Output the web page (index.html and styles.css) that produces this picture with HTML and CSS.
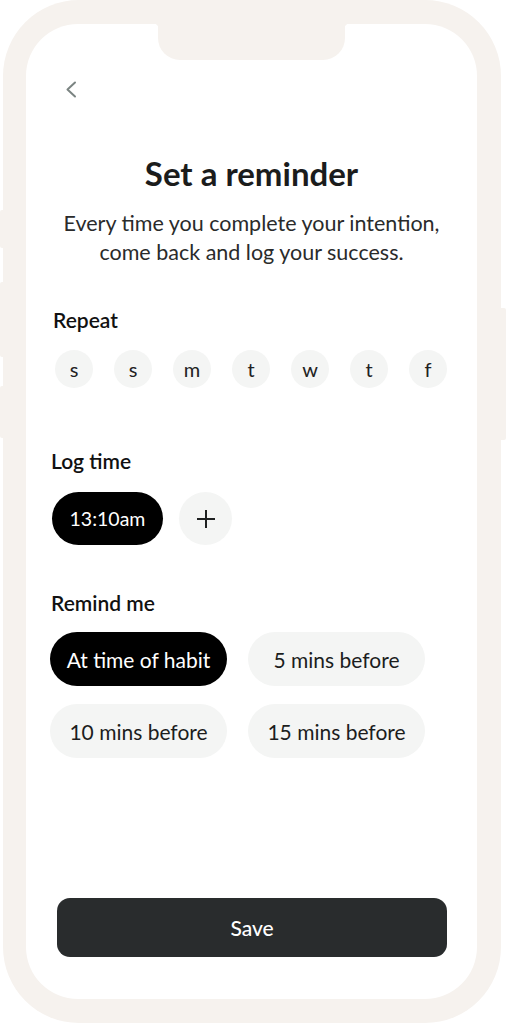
FILE: index.html
```html
<!DOCTYPE html>
<html lang="en">
<head>
    <meta charset="UTF-8">
    <meta name="viewport" content="width=device-width, initial-scale=1.0">
    <title>Set a reminder</title>
    <link rel="stylesheet" href="styles.css">
</head>
<body>
    <div class="phone">
        <span class="side-btn left mute"></span>
        <span class="side-btn left vol-up"></span>
        <span class="side-btn left vol-down"></span>
        <span class="side-btn right power"></span>

        <div class="screen">
            <div class="notch"></div>

            <button class="back" aria-label="Back">
                <svg width="12" height="17" viewBox="0 0 12 17">
                    <polyline points="10,1.5 2.5,8.5 10,15.5" fill="none" stroke="#7b8482" stroke-width="2" stroke-linecap="round" stroke-linejoin="round"/>
                </svg>
            </button>

            <h1 class="title">Set a reminder</h1>
            <p class="intro">Every time you complete your intention,<br>come back and log your success.</p>

            <h2 class="label repeat-label">Repeat</h2>
            <div class="days">
                <span class="day">s</span>
                <span class="day">s</span>
                <span class="day">m</span>
                <span class="day">t</span>
                <span class="day">w</span>
                <span class="day">t</span>
                <span class="day">f</span>
            </div>

            <h2 class="label log-label">Log time</h2>
            <div class="times">
                <span class="chip active time-chip">13:10am</span>
                <button class="add" aria-label="Add time">
                    <svg width="22" height="22" viewBox="0 0 22 22">
                        <path d="M11 2v18M2 11h18" stroke="#1f2121" stroke-width="2"/>
                    </svg>
                </button>
            </div>

            <h2 class="label remind-label">Remind me</h2>
            <div class="options">
                <span class="chip active">At time of habit</span>
                <span class="chip">5 mins before</span>
                <span class="chip">10 mins before</span>
                <span class="chip">15 mins before</span>
            </div>

            <button class="save">Save</button>
        </div>
    </div>
</body>
</html>
```
FILE: styles.css
```css
body {
    margin: 0;
    background: #fff;
    font-family: Lato, "Open Sans", sans-serif;
    color: #1c1d1d;
}

.phone {
    position: relative;
    box-sizing: border-box;
    width: 498px;
    height: 1023px;
    margin-left: 3px;
    padding: 24px 24px 24px 23px;
    background: #f6f2ee;
    border-radius: 76px;
}

.side-btn {
    position: absolute;
    width: 4px;
    background: #f6f2ee;
}
.side-btn.left {
    left: -3px;
    border-radius: 2px 0 0 2px;
}
.mute { top: 210px; height: 38px; }
.vol-up { top: 282px; height: 75px; }
.vol-down { top: 386px; height: 52px; }
.side-btn.right {
    right: -5px;
    width: 6px;
    border-radius: 0 2px 2px 0;
}
.power { top: 308px; height: 132px; }

.screen {
    position: relative;
    box-sizing: border-box;
    height: 100%;
    padding: 57px 25px 42px 25px;
    background: #fff;
    border-radius: 52px;
    display: flex;
    flex-direction: column;
}

.notch {
    position: absolute;
    top: 0;
    left: 132px;
    width: 187px;
    height: 36px;
    background: #f6f2ee;
    border-radius: 0 0 22px 22px;
}
.notch::before,
.notch::after {
    content: "";
    position: absolute;
    top: 0;
    width: 4px;
    height: 4px;
}
.notch::before {
    left: -4px;
    background: radial-gradient(circle at 0 100%, transparent 4px, #f6f2ee 4.5px);
}
.notch::after {
    right: -4px;
    background: radial-gradient(circle at 100% 100%, transparent 4px, #f6f2ee 4.5px);
}

.back {
    align-self: flex-start;
    margin-left: 14px;
    padding: 0;
    border: 0;
    background: none;
    height: 17px;
}

.title {
    margin: 57px 0 0;
    font-size: 33px;
    line-height: 36px;
    font-weight: 700;
    text-align: center;
    color: #1b1c1c;
}

.intro {
    margin: 18px 0 0;
    font-size: 21.5px;
    line-height: 29px;
    text-align: center;
    color: #2a2b2b;
}

.label {
    margin: 0;
    font-size: 21px;
    line-height: 24px;
    font-weight: 600;
    color: #111;
}
.repeat-label { margin-top: 41px; padding-left: 2px; }
.log-label { margin-top: 61px; }
.remind-label { margin-top: 46px; }

.days {
    display: flex;
    justify-content: space-between;
    margin: 18px 5px 0 4px;
}
.day {
    width: 38px;
    height: 38px;
    border-radius: 50%;
    background: #f4f5f4;
    display: flex;
    align-items: center;
    justify-content: center;
    font-size: 20px;
    color: #222;
}

.times {
    display: flex;
    align-items: center;
    gap: 16px;
    margin: 19px 0 0 1px;
}

.chip {
    height: 54px;
    border-radius: 27px;
    background: #f4f5f4;
    display: flex;
    align-items: center;
    justify-content: center;
    font-size: 21px;
    color: #1c1d1d;
}
.chip.active {
    background: #000;
    color: #fff;
}
.time-chip {
    width: 111px;
    height: 53px;
    font-size: 19.5px;
}

.add {
    width: 53px;
    height: 53px;
    padding: 0;
    border: 0;
    border-radius: 50%;
    background: #f4f5f4;
    display: flex;
    align-items: center;
    justify-content: center;
}

.options {
    display: grid;
    grid-template-columns: 177px 177px;
    column-gap: 21px;
    row-gap: 18px;
    margin: 17px 0 0 -1px;
}

.save {
    margin: auto 5px 0 6px;
    height: 59px;
    border: 0;
    border-radius: 13px;
    background: #292c2d;
    color: #fff;
    font-family: inherit;
    font-size: 21px;
    font-weight: 500;
}
```
